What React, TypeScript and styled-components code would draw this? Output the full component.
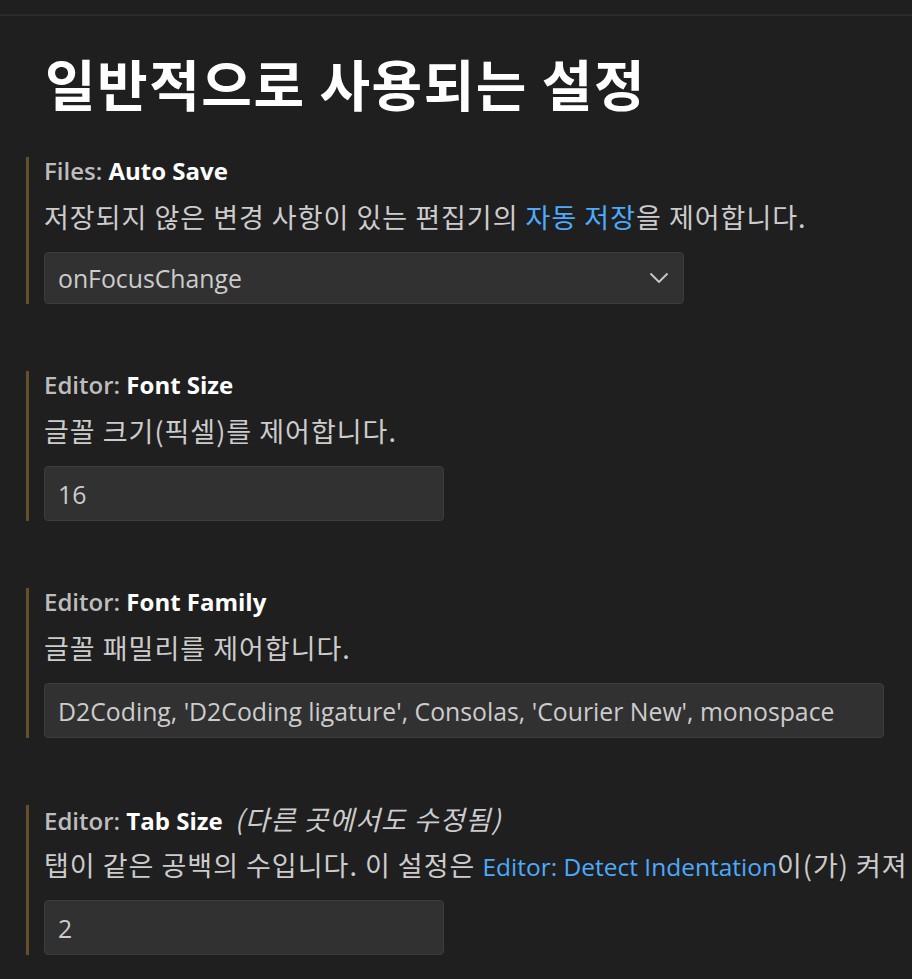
import React from "react";
import styled, { createGlobalStyle } from "styled-components";

const Global = createGlobalStyle`
  html, body { margin: 0; padding: 0; background: #1f1f1f; }
  body { font-family: "Open Sans", "Noto Sans CJK KR", sans-serif; }
`;

const Page = styled.div`
  width: 912px;
  height: 979px;
  overflow: hidden;
  background: #1f1f1f;
  box-sizing: border-box;
`;

const TopRule = styled.div`
  height: 14px;
  border-bottom: 2px solid #2b2b2b;
`;

const Heading = styled.h1`
  margin: 0;
  padding: 30px 0 0 45px;
  height: 125px;
  box-sizing: border-box;
  font-family: "Noto Sans CJK KR", sans-serif;
  font-size: 55px;
  line-height: 72px;
  font-weight: 700;
  color: #ffffff;
  letter-spacing: 1.5px;
`;

const List = styled.div`
  display: flex;
  flex-direction: column;
  gap: 67px;
  padding-top: 16px;
`;

const Item = styled.section`
  margin-left: 26px;
  border-left: 3px solid #66502a;
  padding-left: 15px;
  display: flex;
  flex-direction: column;
`;

const Label = styled.div`
  height: 28px;
  font-family: "Open Sans", "Noto Sans CJK KR", sans-serif;
  font-size: 24px;
  line-height: 28px;
  font-weight: 600;
  color: #bdbdbd;
  white-space: nowrap;
`;

const Key = styled.span`
  color: #ffffff;
  font-weight: 700;
`;

const Modified = styled.span`
  font-family: "Noto Sans CJK KR", sans-serif;
  font-size: 27px;
  line-height: 1;
  letter-spacing: 1px;
  font-style: italic;
  font-weight: 400;
  color: #cccccc;
  margin-left: 12px;
`;

const Desc = styled.div`
  margin-top: 17px;
  height: 30px;
  font-family: "Noto Sans CJK KR", sans-serif;
  font-size: 27px;
  line-height: 30px;
  letter-spacing: 1px;
  color: #cccccc;
  white-space: nowrap;
`;

const Link = styled.span<{ $latin?: boolean }>`
  color: #4daafc;
  ${(p) =>
    p.$latin
      ? `font-family: "Open Sans", sans-serif; font-size: 24.5px; letter-spacing: 0;`
      : ""}
`;

const Field = styled.div<{ $width: number; $height: number }>`
  margin-top: 20px;
  width: ${(p) => p.$width}px;
  height: ${(p) => p.$height}px;
  box-sizing: border-box;
  background: #313131;
  border: 1px solid #3c3c3c;
  border-radius: 4px;
  display: flex;
  align-items: center;
  justify-content: space-between;
  padding: 0 14px 0 13px;
  font-family: "Open Sans", "Noto Sans CJK KR", sans-serif;
  font-size: 24.8px;
  color: #cccccc;
  white-space: nowrap;
`;

const Chevron = () => (
  <svg width="20" height="12" viewBox="0 0 20 12" fill="none">
    <path d="M1.5 1.5 L10 10 L18.5 1.5" stroke="#cccccc" strokeWidth="1.8" />
  </svg>
);

export default function App() {
  return (
    <Page>
      <Global />
      <TopRule />
      <Heading>일반적으로 사용되는 설정</Heading>
      <List>
        <Item>
          <Label>
            Files: <Key>Auto Save</Key>
          </Label>
          <Desc>
            저장되지 않은 변경 사항이 있는 편집기의 <Link>자동 저장</Link>을 제어합니다.
          </Desc>
          <Field $width={640} $height={52}>
            <span>onFocusChange</span>
            <Chevron />
          </Field>
        </Item>
        <Item>
          <Label>
            Editor: <Key>Font Size</Key>
          </Label>
          <Desc>글꼴 크기(픽셀)를 제어합니다.</Desc>
          <Field $width={400} $height={55}>
            16
          </Field>
        </Item>
        <Item>
          <Label>
            Editor: <Key>Font Family</Key>
          </Label>
          <Desc>글꼴 패밀리를 제어합니다.</Desc>
          <Field $width={840} $height={55}>
            D2Coding, 'D2Coding ligature', Consolas, 'Courier New', monospace
          </Field>
        </Item>
        <Item>
          <Label>
            Editor: <Key>Tab Size</Key>
            <Modified>(다른 곳에서도 수정됨)</Modified>
          </Label>
          <Desc>
            탭이 같은 공백의 수입니다. 이 설정은 <Link $latin>Editor: Detect Indentation</Link>이(가) 켜져
          </Desc>
          <Field $width={400} $height={55}>
            2
          </Field>
        </Item>
      </List>
    </Page>
  );
}
